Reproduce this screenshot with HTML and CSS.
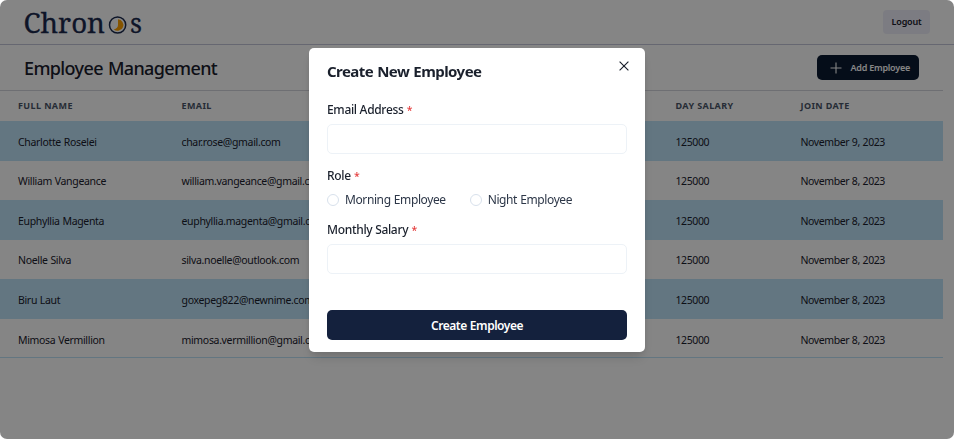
FILE: index.html
```html
<!DOCTYPE html>
<html lang="en">
<head>
<meta charset="utf-8">
<title>Chronos</title>
<link rel="stylesheet" href="styles.css">
</head>
<body>
<div class="app">
  <header class="topbar">
    <svg class="logo" width="120" height="36" viewBox="0 0 120 36" role="img" aria-label="Chronos">
      <text class="logo-text" x="-.5" y="28.5" textLength="81.5" lengthAdjust="spacingAndGlyphs">Chron</text>
      <circle cx="93.6" cy="21" r="8.1" fill="none" stroke="#1b2a4e" stroke-width="1.5"/>
      <path d="M94 15.2A5.8 5.8 0 1 1 89.8 25.4Q94 24.5 94 21Z" fill="#ffa200"/>
      <text class="logo-text" x="106" y="28.5" textLength="12" lengthAdjust="spacingAndGlyphs">s</text>
    </svg>
    <button class="logout">Logout</button>
  </header>
  <main class="content">
    <div class="heading">
      <h1>Employee Management</h1>
      <button class="add">
        <svg width="12" height="12" viewBox="0 0 12 12" fill="none" stroke="#fff" stroke-width="1.1"><path d="M6 .5v11M.5 6h11"/></svg>
        <span>Add Employee</span>
      </button>
    </div>
    <table>
      <colgroup><col class="c-name"><col class="c-email"><col class="c-salary"><col class="c-date"></colgroup>
      <thead><tr><th>Full name</th><th>Email</th><th>Day salary</th><th>Join date</th></tr></thead>
      <tbody>
        <tr><td>Charlotte Roselei</td><td>char.rose@gmail.com</td><td>125000</td><td>November 9, 2023</td></tr>
        <tr><td>William Vangeance</td><td>william.vangeance@gmail.com</td><td>125000</td><td>November 8, 2023</td></tr>
        <tr><td>Euphyllia Magenta</td><td>euphyllia.magenta@gmail.com</td><td>125000</td><td>November 8, 2023</td></tr>
        <tr><td>Noelle Silva</td><td>silva.noelle@outlook.com</td><td>125000</td><td>November 8, 2023</td></tr>
        <tr><td>Biru Laut</td><td>goxepeg822@newnime.com</td><td>125000</td><td>November 8, 2023</td></tr>
        <tr><td>Mimosa Vermillion</td><td>mimosa.vermillion@gmail.com</td><td>125000</td><td>November 8, 2023</td></tr>
      </tbody>
    </table>
  </main>
</div>
<div class="overlay">
  <section class="modal" role="dialog" aria-modal="true">
    <div class="modal-head">
      <h2>Create New Employee</h2>
      <button class="close" aria-label="Close"><svg width="10" height="10" viewBox="0 0 10 10" fill="none" stroke="#1a202c" stroke-width="1.15"><path d="M.6.6l8.8 8.8M9.4.6L.6 9.4"/></svg></button>
    </div>
    <form>
      <label class="label l-email" for="email">Email Address <i>*</i></label>
      <input class="field" id="email" type="text">
      <div class="label l-role">Role <i>*</i></div>
      <div class="radios">
        <label class="radio"><input type="radio" name="role"><span>Morning Employee</span></label>
        <label class="radio"><input type="radio" name="role"><span>Night Employee</span></label>
      </div>
      <label class="label l-salary" for="salary">Monthly Salary <i>*</i></label>
      <input class="field" id="salary" type="text">
      <button class="submit" type="button">Create Employee</button>
    </form>
  </section>
</div>
</body>
</html>
```
FILE: styles.css
```css
* { box-sizing: border-box; }
html { background: #fff; }
body { margin: 0; overflow: hidden; font-family: "Noto Sans", sans-serif; color: #1a202c; }
button, input { font-family: inherit; margin: 0; border: 0; padding: 0; }
h1, h2 { margin: 0; }
.app { height: 439px; }
.topbar { display: flex; align-items: center; justify-content: space-between; height: 45px; padding: 0 24px; border-bottom: 1px solid #c3c5d9; }
.logo { display: block; overflow: visible; }
.logo-text { font-family: "Noto Serif", "Liberation Serif", serif; font-size: 28px; fill: #1b2a4e; stroke: #1b2a4e; stroke-width: .3px; }
.logout { width: 47px; height: 24px; border-radius: 4px; background: #edeef9; color: #1a202c; font-size: 9px; line-height: 12px; font-weight: 600; letter-spacing: -.2px; padding-bottom: 1px; }
.content { width: 943px; }
.heading { display: flex; align-items: center; justify-content: space-between; height: 46px; padding: 0 24px; border-bottom: 1px solid #d4d5dc; }
h1 { font-size: 18px; font-weight: 550; line-height: 24px; letter-spacing: -.63px; word-spacing: 1px; padding-top: 1px; }
.add { display: flex; align-items: center; gap: 9px; width: 102px; height: 25px; padding: 0 8px 0 12.5px; border-radius: 5px; background: #0a1931; color: #fff; font-size: 9px; font-weight: 600; letter-spacing: -.24px; white-space: nowrap; }
.add svg { flex: none; }
table { width: 943px; table-layout: fixed; border-collapse: separate; border-spacing: 0; }
.c-name { width: 163.5px; }
.c-email { width: 494px; }
.c-salary { width: 125px; }
th, td { padding: 0 18px; text-align: left; white-space: nowrap; }
th { height: 30px; font-size: 9px; line-height: 12px; font-weight: 700; letter-spacing: .4px; text-transform: uppercase; color: #4a5568; }
td { height: 39.55px; padding-top: 4px; font-size: 10.5px; line-height: 15px; letter-spacing: -.33px; word-spacing: .4px; color: #1a202c; border-bottom: 1px solid transparent; }
td:nth-child(n+3) { letter-spacing: -.41px; }
tbody tr:nth-child(odd) { background: #bee3f8; }
tbody tr:last-child td { border-bottom-color: #bee3f8; }
.overlay { position: fixed; inset: 0; display: flex; justify-content: center; align-items: flex-start; padding-top: 48px; background: rgba(0, 0, 0, .48); border-radius: 7px; }
.modal { width: 336px; height: 304px; padding: 0 18px; border-radius: 5px; background: #fff; box-shadow: 0 8px 12px -2px rgba(0, 0, 0, .12), 0 3px 5px rgba(0, 0, 0, .06); }
.modal-head { display: flex; justify-content: space-between; height: 53px; padding-top: 11px; }
h2 { font-size: 15px; font-weight: 700; line-height: 24px; letter-spacing: -.56px; word-spacing: .8px; }
.close { display: flex; align-items: center; justify-content: center; width: 10px; height: 13px; margin-right: -2px; background: none; }
form { display: flex; flex-direction: column; }
.label { height: 18px; font-size: 12px; line-height: 18px; font-weight: 500; letter-spacing: -.32px; color: #1a202c; }
.label i { margin-left: .5px; color: #e53e3e; font-size: 10.5px; line-height: 12px; font-style: normal; }
.field { width: 300px; height: 30px; margin-top: 4px; border: 1px solid #edf2f7; border-radius: 5px; background: #fff; }
#email { margin-top: 5px; }
.l-role { margin-top: 13px; }
.radios { display: flex; gap: 24px; height: 18px; margin-top: 6px; }
.radio { display: flex; align-items: center; gap: 6px; font-size: 12px; line-height: 18px; letter-spacing: -.4px; word-spacing: .5px; white-space: nowrap; color: #2d3748; }
.radio input { appearance: none; flex: none; width: 12px; height: 12px; border: 1.5px solid #d8e1ec; border-radius: 50%; }
.l-salary { margin-top: 12px; }
#salary { margin-top: 5px; }
.submit { width: 300px; height: 30px; margin-top: 36px; padding-top: 1px; border-radius: 5px; background: #14213d; color: #fff; font-size: 12px; font-weight: 600; letter-spacing: -.47px; word-spacing: .5px; }
```
